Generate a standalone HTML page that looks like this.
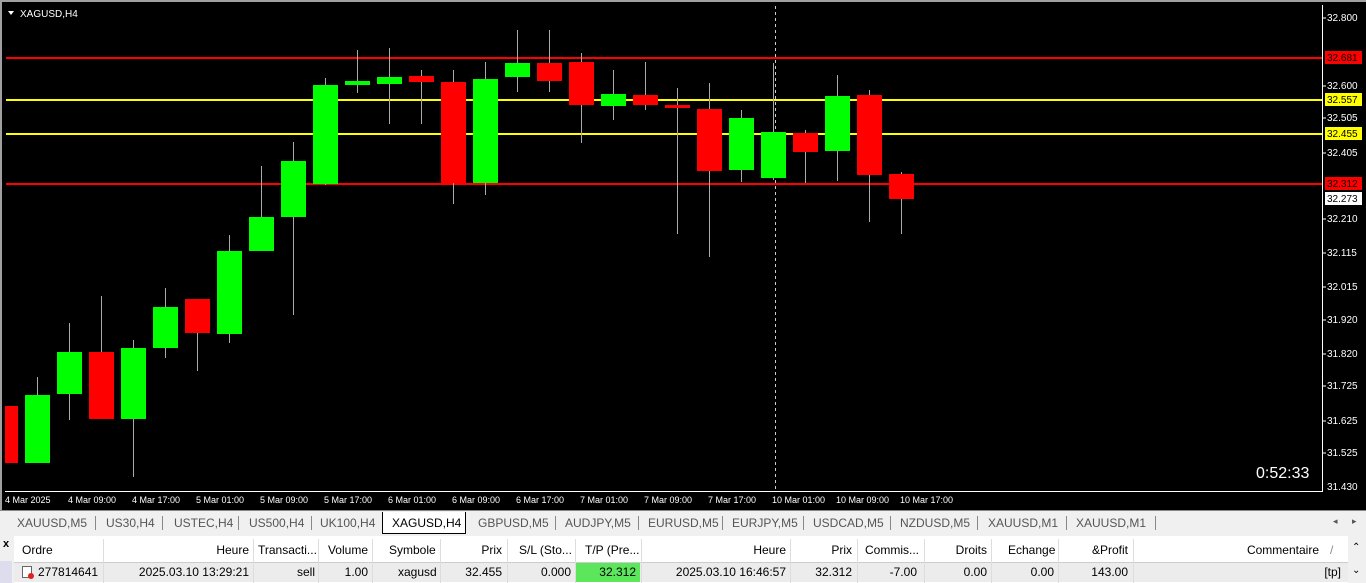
<!DOCTYPE html>
<html><head><meta charset="utf-8"><style>
*{margin:0;padding:0;box-sizing:border-box}
body{width:1366px;height:583px;overflow:hidden;background:#f0f0f0;font-family:"Liberation Sans",sans-serif;position:relative}
#chart{position:absolute;left:0;top:0;width:1366px;height:510px;background:#000;border-top:2px solid #a0a0a0;border-left:2px solid #a0a0a0}
svg text{font-family:"Liberation Sans",sans-serif}
#tabs{position:absolute;left:0;top:510px;width:1366px;height:24px;background:#f0f0f0;border-top:1px solid #888}
.tab{position:absolute;top:5px;font-size:12px;color:#555}
.sep{position:absolute;top:5px;width:1px;height:14px;background:#888}
#term{position:absolute;left:0;top:536px;width:1366px;height:47px;background:#fff}
.c{position:absolute;font-size:12px;color:#000;height:22px;line-height:22px;white-space:nowrap}
.v{position:absolute;top:3px;width:1px;height:44px;background:#ddd}
</style></head><body>
<div id="chart">
<svg width="1366" height="510" style="position:absolute;left:-2px;top:-2px">
<line x1="1322.5" y1="5" x2="1322.5" y2="492" stroke="#fff"/>
<line x1="5" y1="491.5" x2="1323" y2="491.5" stroke="#fff"/>
<line x1="775.5" y1="6" x2="775.5" y2="491" stroke="#ccc" stroke-dasharray="3,3"/>
<g stroke="#f00" stroke-width="2"><line x1="6" y1="58" x2="1322" y2="58"/><line x1="6" y1="184" x2="1322" y2="184"/></g>
<g stroke="#ff0" stroke-width="2"><line x1="6" y1="100" x2="1322" y2="100"/><line x1="6" y1="134" x2="1322" y2="134"/></g>
<g stroke="#aaa" stroke-width="1">
<line x1="37.5" y1="377" x2="37.5" y2="463"/><line x1="69.5" y1="323" x2="69.5" y2="420"/><line x1="101.5" y1="296" x2="101.5" y2="419"/><line x1="133.5" y1="340" x2="133.5" y2="477"/><line x1="165.5" y1="288" x2="165.5" y2="358"/><line x1="197.5" y1="299" x2="197.5" y2="371"/><line x1="229.5" y1="235" x2="229.5" y2="343"/><line x1="261.5" y1="166" x2="261.5" y2="251"/><line x1="293.5" y1="142" x2="293.5" y2="315"/><line x1="325.5" y1="78" x2="325.5" y2="185"/><line x1="357.5" y1="50" x2="357.5" y2="93"/><line x1="389.5" y1="48" x2="389.5" y2="124"/><line x1="421.5" y1="70" x2="421.5" y2="124"/><line x1="453.5" y1="70" x2="453.5" y2="204"/><line x1="485.5" y1="62" x2="485.5" y2="195"/><line x1="517.5" y1="30" x2="517.5" y2="92"/><line x1="549.5" y1="30" x2="549.5" y2="92"/><line x1="581.5" y1="53" x2="581.5" y2="143"/><line x1="613.5" y1="70" x2="613.5" y2="120"/><line x1="645.5" y1="62" x2="645.5" y2="110"/><line x1="677.5" y1="88" x2="677.5" y2="234"/><line x1="709.5" y1="83" x2="709.5" y2="257"/><line x1="741.5" y1="110" x2="741.5" y2="182"/><line x1="773.5" y1="63" x2="773.5" y2="180"/><line x1="805.5" y1="130" x2="805.5" y2="183"/><line x1="837.5" y1="75" x2="837.5" y2="181"/><line x1="869.5" y1="90" x2="869.5" y2="222"/><line x1="901.5" y1="172" x2="901.5" y2="234"/>
</g>
<g fill="#00ff00">
<rect x="25" y="395" width="25" height="68"/><rect x="57" y="352" width="25" height="42"/><rect x="121" y="348" width="25" height="71"/><rect x="153" y="307" width="25" height="41"/><rect x="217" y="251" width="25" height="83"/><rect x="249" y="217" width="25" height="34"/><rect x="281" y="161" width="25" height="56"/><rect x="313" y="85" width="25" height="99"/><rect x="345" y="81" width="25" height="4"/><rect x="377" y="77" width="25" height="7"/><rect x="473" y="79" width="25" height="104"/><rect x="505" y="63" width="25" height="14"/><rect x="601" y="94" width="25" height="12"/><rect x="729" y="118" width="25" height="52"/><rect x="761" y="132" width="25" height="46"/><rect x="825" y="96" width="25" height="55"/>
</g>
<g fill="#ff0000">
<rect x="5" y="406" width="13" height="57"/><rect x="89" y="352" width="25" height="67"/><rect x="185" y="299" width="25" height="34"/><rect x="409" y="76" width="25" height="6"/><rect x="441" y="82" width="25" height="101"/><rect x="537" y="63" width="25" height="18"/><rect x="569" y="62" width="25" height="43"/><rect x="633" y="95" width="25" height="10"/><rect x="665" y="105" width="25" height="3"/><rect x="697" y="109" width="25" height="62"/><rect x="793" y="133" width="25" height="19"/><rect x="857" y="95" width="25" height="80"/><rect x="889" y="174" width="25" height="25"/>
</g>
<polygon points="8,11 14,11 11,15" fill="#fff"/>
<text x="20" y="17" fill="#fff" font-size="10">XAGUSD,H4</text>
<g fill="#fff" font-size="10">
<text x="1327" y="21">32.800</text><text x="1327" y="89">32.600</text><text x="1327" y="121">32.505</text><text x="1327" y="156">32.405</text><text x="1327" y="222">32.210</text><text x="1327" y="256">32.115</text><text x="1327" y="290">32.015</text><text x="1327" y="323">31.920</text><text x="1327" y="357">31.820</text><text x="1327" y="389">31.725</text><text x="1327" y="424">31.625</text><text x="1327" y="456">31.525</text><text x="1327" y="490">31.430</text>
</g>
<g stroke="#fff"><line x1="1323" y1="18" x2="1326" y2="18"/><line x1="1323" y1="86" x2="1326" y2="86"/><line x1="1323" y1="118" x2="1326" y2="118"/><line x1="1323" y1="153" x2="1326" y2="153"/><line x1="1323" y1="219" x2="1326" y2="219"/><line x1="1323" y1="253" x2="1326" y2="253"/><line x1="1323" y1="287" x2="1326" y2="287"/><line x1="1323" y1="320" x2="1326" y2="320"/><line x1="1323" y1="354" x2="1326" y2="354"/><line x1="1323" y1="386" x2="1326" y2="386"/><line x1="1323" y1="421" x2="1326" y2="421"/><line x1="1323" y1="453" x2="1326" y2="453"/></g>
<rect x="1325" y="51" width="37" height="13" fill="#f00"/><text x="1327" y="61" font-size="10" fill="#000">32.681</text>
<rect x="1325" y="93" width="37" height="13" fill="#ff0"/><text x="1327" y="103" font-size="10" fill="#000">32.557</text>
<rect x="1325" y="127" width="37" height="13" fill="#ff0"/><text x="1327" y="137" font-size="10" fill="#000">32.455</text>
<rect x="1325" y="177" width="37" height="13" fill="#f00"/><text x="1327" y="187" font-size="10" fill="#000">32.312</text>
<rect x="1325" y="192" width="37" height="13" fill="#fff"/><text x="1327" y="202" font-size="10" fill="#000">32.273</text>
<text x="1256" y="478" fill="#fff" font-size="16">0:52:33</text>
<g fill="#fff" font-size="9">
<text x="5" y="503">4 Mar 2025</text><text x="68" y="503">4 Mar 09:00</text><text x="132" y="503">4 Mar 17:00</text><text x="196" y="503">5 Mar 01:00</text><text x="260" y="503">5 Mar 09:00</text><text x="324" y="503">5 Mar 17:00</text><text x="388" y="503">6 Mar 01:00</text><text x="452" y="503">6 Mar 09:00</text><text x="516" y="503">6 Mar 17:00</text><text x="580" y="503">7 Mar 01:00</text><text x="644" y="503">7 Mar 09:00</text><text x="708" y="503">7 Mar 17:00</text><text x="772" y="503">10 Mar 01:00</text><text x="836" y="503">10 Mar 09:00</text><text x="900" y="503">10 Mar 17:00</text>
</g>
</svg>
</div>
<div id="tabs">
<span class="tab" style="left:17px">XAUUSD,M5</span><div class="sep" style="left:95px"></div>
<span class="tab" style="left:106px">US30,H4</span><div class="sep" style="left:162px"></div>
<span class="tab" style="left:174px">USTEC,H4</span><div class="sep" style="left:238px"></div>
<span class="tab" style="left:249px">US500,H4</span><div class="sep" style="left:311px"></div>
<span class="tab" style="left:320px">UK100,H4</span>
<div style="position:absolute;left:382px;top:1px;width:84px;height:22px;background:#fff;border:1px solid #000;border-top:none"></div>
<span class="tab" style="left:392px;color:#000">XAGUSD,H4</span>
<span class="tab" style="left:478px">GBPUSD,M5</span><div class="sep" style="left:555px"></div>
<span class="tab" style="left:565px">AUDJPY,M5</span><div class="sep" style="left:638px"></div>
<span class="tab" style="left:648px">EURUSD,M5</span><div class="sep" style="left:722px"></div>
<span class="tab" style="left:732px">EURJPY,M5</span><div class="sep" style="left:803px"></div>
<span class="tab" style="left:813px">USDCAD,M5</span><div class="sep" style="left:890px"></div>
<span class="tab" style="left:900px">NZDUSD,M5</span><div class="sep" style="left:977px"></div>
<span class="tab" style="left:988px">XAUUSD,M1</span><div class="sep" style="left:1066px"></div>
<span class="tab" style="left:1076px">XAUUSD,M1</span><div class="sep" style="left:1155px"></div>
<span class="tab" style="left:1333px;font-size:9px">◂</span><span class="tab" style="left:1352px;font-size:9px">▸</span>
</div>
<div id="term">
<div style="position:absolute;left:0;top:0;width:14px;height:47px;background:#f0f0f0"></div>
<div style="position:absolute;left:3px;top:2px;font-size:11px;font-weight:bold">x</div>
<div style="position:absolute;left:0;top:25px;width:12px;height:22px;background:#dde"></div>
<div style="position:absolute;left:14px;top:26px;width:1352px;height:20px;background:#ececec;border-top:1px solid #ccc"></div>
<div style="position:absolute;left:576px;top:27px;width:64px;height:19px;background:#5ce65c"></div>
<div class="v" style="left:103px"></div><div class="v" style="left:253px"></div><div class="v" style="left:318px"></div><div class="v" style="left:372px"></div><div class="v" style="left:440px"></div><div class="v" style="left:507px"></div><div class="v" style="left:575px"></div><div class="v" style="left:641px"></div><div class="v" style="left:790px"></div><div class="v" style="left:857px"></div><div class="v" style="left:924px"></div><div class="v" style="left:991px"></div><div class="v" style="left:1058px"></div><div class="v" style="left:1133px"></div>
<div style="position:absolute;left:1348px;top:0;width:18px;height:47px;background:#f0f0f0"></div>
<div class="c" style="left:22px;top:3px">Ordre</div>
<div class="c" style="left:104px;width:145px;text-align:right;top:3px">Heure</div>
<div class="c" style="left:258px;top:3px">Transacti...</div>
<div class="c" style="left:320px;width:48px;text-align:right;top:3px">Volume</div>
<div class="c" style="left:389px;top:3px">Symbole</div>
<div class="c" style="left:440px;width:62px;text-align:right;top:3px">Prix</div>
<div class="c" style="left:519px;top:3px">S/L (Sto...</div>
<div class="c" style="left:585px;top:3px">T/P (Pre...</div>
<div class="c" style="left:640px;width:146px;text-align:right;top:3px">Heure</div>
<div class="c" style="left:790px;width:62px;text-align:right;top:3px">Prix</div>
<div class="c" style="left:865px;top:3px">Commis...</div>
<div class="c" style="left:920px;width:67px;text-align:right;top:3px">Droits</div>
<div class="c" style="left:1008px;top:3px">Echange</div>
<div class="c" style="left:1060px;width:68px;text-align:right;top:3px">&amp;Profit</div>
<div class="c" style="left:1200px;width:119px;text-align:right;top:3px">Commentaire</div>
<div class="c" style="left:1330px;top:3px;color:#888">/</div>
<div class="c" style="left:1352px;top:1px;font-size:10px">⌃</div>
<div style="position:absolute;left:22px;top:30px;width:10px;height:12px;border:1px solid #666;background:#fff"></div>
<div style="position:absolute;left:28px;top:37px;width:6px;height:6px;border-radius:50%;background:#d22"></div>
<div class="c" style="left:38px;top:25px">277814641</div>
<div class="c" style="left:104px;width:145px;text-align:right;top:25px">2025.03.10 13:29:21</div>
<div class="c" style="left:258px;width:57px;text-align:right;top:25px">sell</div>
<div class="c" style="left:320px;width:48px;text-align:right;top:25px">1.00</div>
<div class="c" style="left:398px;top:25px">xagusd</div>
<div class="c" style="left:440px;width:62px;text-align:right;top:25px">32.455</div>
<div class="c" style="left:510px;width:61px;text-align:right;top:25px">0.000</div>
<div class="c" style="left:576px;width:60px;text-align:right;top:25px">32.312</div>
<div class="c" style="left:640px;width:146px;text-align:right;top:25px">2025.03.10 16:46:57</div>
<div class="c" style="left:790px;width:62px;text-align:right;top:25px">32.312</div>
<div class="c" style="left:860px;width:57px;text-align:right;top:25px">-7.00</div>
<div class="c" style="left:920px;width:67px;text-align:right;top:25px">0.00</div>
<div class="c" style="left:990px;width:64px;text-align:right;top:25px">0.00</div>
<div class="c" style="left:1060px;width:68px;text-align:right;top:25px">143.00</div>
<div class="c" style="left:1280px;width:61px;text-align:right;top:25px">[tp]</div>
<div class="c" style="left:1352px;top:24px;font-size:10px">⌄</div>
</div>
</body></html>
